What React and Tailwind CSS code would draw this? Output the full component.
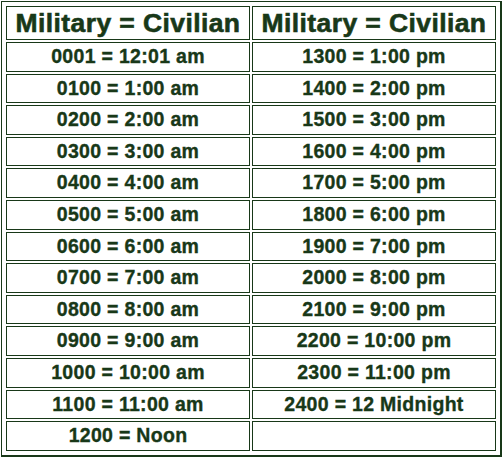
const left = [
  '0001 = 12:01 am',
  '0100 = 1:00 am',
  '0200 = 2:00 am',
  '0300 = 3:00 am',
  '0400 = 4:00 am',
  '0500 = 5:00 am',
  '0600 = 6:00 am',
  '0700 = 7:00 am',
  '0800 = 8:00 am',
  '0900 = 9:00 am',
  '1000 = 10:00 am',
  '1100 = 11:00 am',
  '1200 = Noon',
];

const right = [
  '1300 = 1:00 pm',
  '1400 = 2:00 pm',
  '1500 = 3:00 pm',
  '1600 = 4:00 pm',
  '1700 = 5:00 pm',
  '1800 = 6:00 pm',
  '1900 = 7:00 pm',
  '2000 = 8:00 pm',
  '2100 = 9:00 pm',
  '2200 = 10:00 pm',
  '2300 = 11:00 pm',
  '2400 = 12 Midnight',
  '',
];

const cell = 'border border-[#183818] text-center align-middle p-0';
const head = cell + ' text-[26.5px] leading-none tracking-[0.4px] [-webkit-text-stroke:0.6px_#183818]';
const body = cell + ' text-[19.5px] leading-none tracking-[0.3px] [-webkit-text-stroke:0.35px_#183818]';

export default function App() {
  return (
    <div className="bg-white w-[504px] h-[458px] pt-[1px] pl-[1px] font-['Liberation_Sans',Arial,sans-serif] font-bold text-[#183818]">
      <div className="w-[501px] border border-r-2 border-b-2 border-[#183818] p-[2px]">
        <table className="w-full border-separate border-spacing-[2px] table-fixed">
          <tbody>
            <tr className="h-[34px]">
              <th className={head}>Military = Civilian</th>
              <th className={head}>Military = Civilian</th>
            </tr>
            {left.map((l, i) => (
              <tr key={l} className="h-[29.6px]">
                <td className={body}>{l}</td>
                <td className={body}>{right[i]}</td>
              </tr>
            ))}
          </tbody>
        </table>
      </div>
    </div>
  );
}
